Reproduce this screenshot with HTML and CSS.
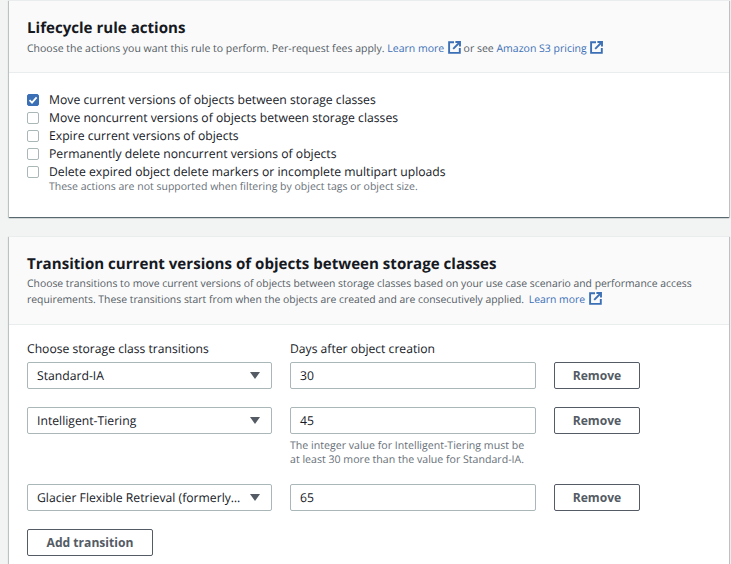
FILE: index.html
```html
<!DOCTYPE html>
<html lang="en">
<head>
<meta charset="utf-8">
<title>Lifecycle rule actions</title>
<link rel="stylesheet" href="styles.css">
</head>
<body>
<svg class="defs" width="0" height="0" aria-hidden="true">
  <symbol id="ext" viewBox="0 0 13 13">
    <path d="M6 1.2H1.1v10.7h10.7V7" fill="none" stroke="currentColor" stroke-width="1.9"/>
    <path d="M5.2 7.8 11 2" fill="none" stroke="currentColor" stroke-width="1.9"/>
    <path d="M7.4 1h4.6v4.6" fill="none" stroke="currentColor" stroke-width="1.9"/>
  </symbol>
</svg>
<main class="page">
  <section class="card first">
    <header class="card-head head-one">
      <h2>Lifecycle rule actions</h2>
      <p>Choose the actions you want this rule to perform. Per-request fees apply. <a href="#">Learn more <svg class="ext"><use href="#ext"/></svg></a> or see <a href="#">Amazon S3 pricing <svg class="ext"><use href="#ext"/></svg></a></p>
    </header>
    <div class="card-body checks">
      <label class="check"><span class="box on"><svg viewBox="0 0 12 12" width="12" height="12"><path d="M2.5 6.2 5 8.7 9.6 3.4" fill="none" stroke="#fff" stroke-width="1.8"/></svg></span>Move current versions of objects between storage classes</label>
      <label class="check"><span class="box"></span>Move noncurrent versions of objects between storage classes</label>
      <label class="check"><span class="box"></span>Expire current versions of objects</label>
      <label class="check"><span class="box"></span>Permanently delete noncurrent versions of objects</label>
      <label class="check"><span class="box"></span>Delete expired object delete markers or incomplete multipart uploads</label>
      <p class="hint check-hint">These actions are not supported when filtering by object tags or object size.</p>
    </div>
  </section>
  <section class="card second">
    <header class="card-head head-two">
      <h2>Transition current versions of objects between storage classes</h2>
      <p>Choose transitions to move current versions of objects between storage classes based on your use case scenario and performance access requirements. These transitions start from when the objects are created and are consecutively applied. <a class="more" href="#">Learn more <svg class="ext"><use href="#ext"/></svg></a></p>
    </header>
    <div class="card-body form">
      <div class="row labels">
        <span>Choose storage class transitions</span>
        <span>Days after object creation</span>
      </div>
      <div class="row">
        <div class="select"><span class="select-text">Standard-IA</span><i class="caret"></i></div>
        <div class="input">30</div>
        <button class="btn">Remove</button>
      </div>
      <div class="row">
        <div class="select"><span class="select-text">Intelligent-Tiering</span><i class="caret"></i></div>
        <div class="field">
          <div class="input">45</div>
          <p class="hint">The integer value for Intelligent-Tiering must be at least 30 more than the value for Standard-IA.</p>
        </div>
        <button class="btn">Remove</button>
      </div>
      <div class="row">
        <div class="select"><span class="select-text">Glacier Flexible Retrieval (formerly…</span><i class="caret"></i></div>
        <div class="input">65</div>
        <button class="btn">Remove</button>
      </div>
      <button class="btn add">Add transition</button>
    </div>
  </section>
</main>
</body>
</html>
```
FILE: styles.css
```css
* { box-sizing: border-box; }
html, body { margin: 0; height: 564px; overflow: hidden; }
body {
  background: #f2f3f3;
  color: #16191f;
  font-family: "Open Sans", "Noto Sans", "Liberation Sans", sans-serif;
  font-size: 12.2px;
  text-rendering: geometricPrecision;
}
.defs { position: absolute; }
.page { height: 564px; overflow: hidden; padding: 0 2px 0 9px; display: flex; flex-direction: column; gap: 19px; }
.card {
  background: #fff;
  border-top: 1px solid #eaeded;
  box-shadow: 0 1px 1px rgba(0,28,36,.5), 1px 1px 1px rgba(0,28,36,.15), -1px 1px 1px rgba(0,28,36,.15);
}
.second { flex: 1; }
.card-head { background: #fafafa; border-bottom: 1px solid #eaeded; padding: 0 18px; }
.head-one { height: 72px; padding-top: 16px; }
.head-two { height: 88px; padding-top: 16px; }
h2 { margin: 0; font-size: 15.1px; line-height: 22px; font-weight: 700; }
.card-head p { margin: 2px 0 0; font-size: 10.38px; line-height: 15px; color: #545b64; }
.head-one p { font-size: 10.5px; }
a { color: #3b6fb6; text-decoration: none; }
.more { margin-left: 2px; }
.ext { width: 13px; height: 13px; vertical-align: -2px; margin: 0 0 0 1px; color: #3b6fb6; }
.checks { height: 144px; padding: 17px 18px 0; }
.check { display: flex; align-items: center; height: 18px; gap: 10px; font-size: 12.2px; }
.box { width: 12px; height: 12px; margin-top: 2px; border: 1px solid #aab7b8; border-radius: 2px; background: #fff; flex: none; display: flex; }
.box.on { background: #3b6fb6; border-color: #3b6fb6; }
.box.on svg { margin: -1px; flex: none; }
.hint { margin: 0; font-size: 10.6px; line-height: 14px; color: #687078; }
.check-hint { padding-left: 22px; font-size: 10.5px; }
.form { padding: 15px 18px 0; display: flex; flex-direction: column; }
.row { display: grid; grid-template-columns: 245px 246px 86px; column-gap: 18px; margin-bottom: 18px; align-items: start; }
.labels { margin-bottom: 5px; font-size: 12.15px; line-height: 17px; }
.select, .input {
  height: 27px;
  border: 1px solid #aab7b8;
  border-radius: 2px;
  background: #fff;
  font-size: 12.2px;
  display: flex;
  align-items: center;
}
.select { padding: 0 11px 0 9px; gap: 3px; justify-content: space-between; }
.select-text { white-space: nowrap; }
.caret { flex: none; width: 0; height: 0; border-left: 5px solid transparent; border-right: 5px solid transparent; border-top: 7px solid #545b64; }
.input { padding: 0 9px; }
.field .hint { padding-top: 5px; margin-bottom: -1px; width: 240px; }
.btn {
  height: 27px;
  border: 1px solid #545b64;
  border-radius: 2px;
  background: #fff;
  color: #545b64;
  font: 700 12.1px "Open Sans", "Noto Sans", sans-serif;
  padding: 0;
}
.add { width: 126px; }
```
